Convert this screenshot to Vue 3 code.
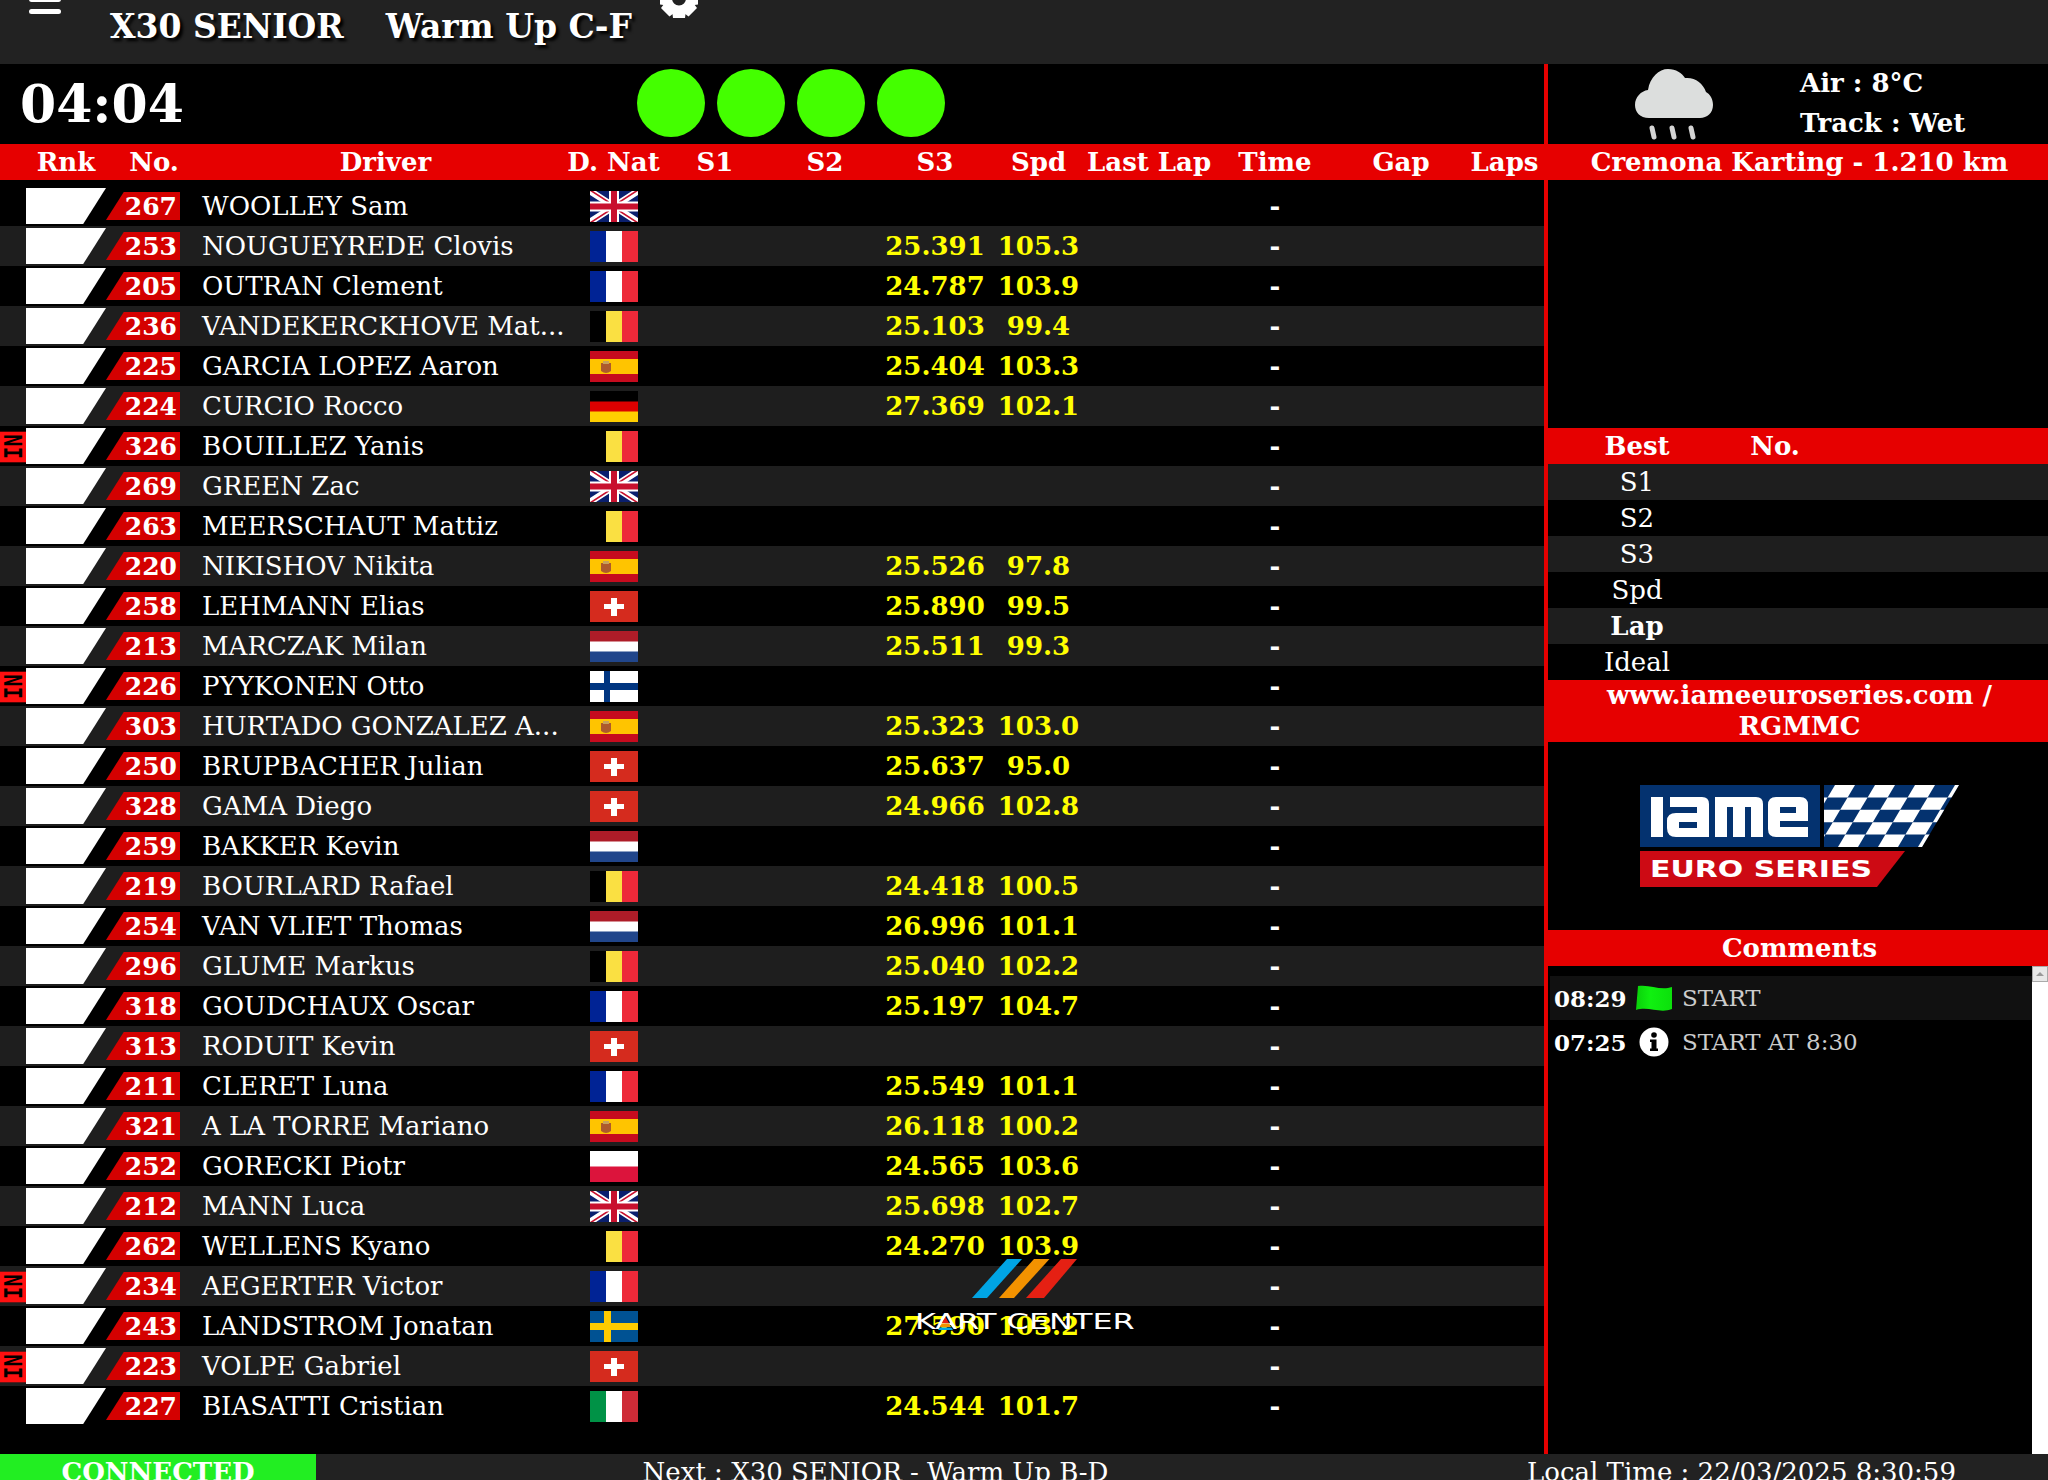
<template>
  <div class="page">
    <header class="topbar">
      <svg class="menu-icon" viewBox="0 0 32 14" width="32" height="14">
        <rect x="0" y="-3" width="32" height="5" rx="2.5" fill="#fff" />
        <rect x="0" y="9" width="32" height="5" rx="2.5" fill="#fff" />
      </svg>
      <div class="title">
        <span>X30 SENIOR</span>
        <span>Warm Up C-F</span>
      </div>
      <svg class="gear-icon" viewBox="0 0 38 19" width="38" height="19">
        <g transform="translate(19 -1.500)">
          <path
            v-for="a in gearTeeth"
            :key="a"
            d="M-6-19.500H6L7-12H-7Z"
            fill="#fff"
            :transform="`rotate(${a})`"
          />
          <path d="M0-14A14 14 0 1 0 0 14A14 14 0 1 0 0-14ZM0-7A7 7 0 1 1 0 7A7 7 0 1 1 0-7Z" fill="#fff" />
        </g>
      </svg>
    </header>

    <main class="main">
      <section class="board">
        <div class="status">
          <div class="timer">04:04</div>
          <div class="lights">
            <span v-for="n in 4" :key="n" class="light"></span>
          </div>
        </div>
        <div class="grid-row head">
          <span class="c-rnk">Rnk</span>
          <span class="c-shift">No.</span>
          <span class="c-driver">Driver</span>
          <span class="c-nat">D. Nat</span>
          <span>S1</span>
          <span>S2</span>
          <span>S3</span>
          <span>Spd</span>
          <span>Last Lap</span>
          <span class="c-shift">Time</span>
          <span class="c-shift">Gap</span>
          <span class="c-shift">Laps</span>
        </div>
        <div class="rows">
          <div v-for="d in drivers" :key="d.no" class="grid-row line">
            <span class="pit"><b v-if="d.pit">IN</b></span>
            <span class="rank"></span>
            <span class="num">{{ d.no }}</span>
            <span class="name">{{ d.name }}</span>
            <span class="nat">
              <svg viewBox="0 0 48 31" width="48" height="31">
                <path
                  v-for="(s, i) in flags[d.nat]"
                  :key="i"
                  :d="s[0]"
                  :fill="s[1]"
                />
              </svg>
            </span>
            <span></span>
            <span></span>
            <span class="val">{{ d.s3 }}</span>
            <span class="val">{{ d.spd }}</span>
            <span></span>
            <span class="dash">-</span>
            <span></span>
            <span></span>
          </div>
          <div class="kart-logo">
            <svg viewBox="0 0 105 39" width="105" height="39">
              <path d="M35 0H50L15 39H0Z" fill="#00a4e4" />
              <path d="M62 0H77.500L42 39H27Z" fill="#f39200" />
              <path d="M89 0H105L72 39H54Z" fill="#e52013" />
            </svg>
            <div class="kart-name">KART CENTER</div>
            <svg class="kart-a" viewBox="0 0 15 13" width="15" height="13">
              <path d="M7.500 0L11 6H4Z" fill="#e52013" />
              <path d="M3.700 6.500H11.300L13 10H2Z" fill="#f39200" />
              <path d="M1.800 10.500H13.200L15 13H0Z" fill="#00a4e4" />
            </svg>
          </div>
        </div>
      </section>

      <aside class="side">
        <div class="weather">
          <svg class="cloud" viewBox="0 0 78 72" width="78" height="72">
            <path
              d="M14 50C5 50 0 44 0 37C0 29 6 23 13 22C15 9 24 1 33 1C41 1 47 5 50 10C60 9 68 15 71 24C75 26 78 31 78 37C78 45 72 50 65 50Z"
              fill="#dcdedd"
            />
            <path d="M17 60L19 69M37 60L39 69M56 60L58 69" stroke="#d4d4d4" stroke-width="5" stroke-linecap="round" />
          </svg>
          <div class="weather-text">
            <div>Air : 8°C</div>
            <div>Track : Wet</div>
          </div>
        </div>
        <div class="band">Cremona Karting - 1.210 km</div>
        <div class="side-gap"></div>
        <div class="best-row band">
          <span>Best</span>
          <span>No.</span>
        </div>
        <div v-for="b in bests" :key="b" class="best-row item" :class="{ strong: b === 'Lap' }">
          <span>{{ b }}</span>
        </div>
        <div class="band link">www.iameeuroseries.com / RGMMC</div>
        <div class="iame">
          <svg viewBox="0 0 320 102" width="320" height="102">
            <defs>
              <clipPath id="iame-flag">
                <path d="M184 0H319L282 62H184Z" />
              </clipPath>
            </defs>
            <path d="M0 0H180V62H0Z" fill="#04326f" />
            <path d="M184 0H319L282 62H184Z" fill="#04326f" />
            <g clip-path="url(#iame-flag)">
              <path v-for="(c, i) in checks" :key="i" :d="c" fill="#fff" />
            </g>
            <path d="M11 12H23V52H11Z" fill="#fff" />
            <path d="M30 12H62Q69 12 69 19V52H36Q27 52 27 43V36Q27 28 36 28H57V22H30ZM39 37V43H57V37Z" fill="#fff" />
            <path d="M75 12H116Q123 12 123 19V52H111V22H105V52H93V22H87V52H75Z" fill="#fff" />
            <path d="M128 20Q128 12 136 12H160Q168 12 168 20V36H140V42H168V52H136Q128 52 128 44ZM140 22V28H156V22Z" fill="#fff" />
            <path d="M0 66H265L237 102H0Z" fill="#cd0a14" />
            <text x="10" y="92" class="euro" textLength="222" lengthAdjust="spacingAndGlyphs">EURO SERIES</text>
          </svg>
        </div>
        <div class="band">Comments</div>
        <div class="comments">
          <div class="comment-list">
            <div class="comment shaded">
              <b>08:29</b>
              <svg viewBox="0 0 36 27" width="36" height="27">
                <defs>
                  <linearGradient id="flag-green" x1="0" x2="1" y1="0" y2="0">
                    <stop offset="0" stop-color="#0ad00a" />
                    <stop offset="0.4" stop-color="#10f010" />
                    <stop offset="1" stop-color="#0ce00c" />
                  </linearGradient>
                </defs>
                <path d="M2 1C14 -1 24 6 36 2L36 24C24 29 13 21 0 25Z" fill="url(#flag-green)" />
              </svg>
              <span>START</span>
            </div>
            <div class="comment">
              <b>07:25</b>
              <svg viewBox="0 0 36 30" width="36" height="30">
                <circle cx="18" cy="15" r="14.500" fill="#fff" />
                <circle cx="18" cy="8" r="2.800" fill="#000" />
                <path d="M14 12.500H20.500V21.500H22V24H14V21.500H15.500V15H14Z" fill="#000" />
              </svg>
              <span>START AT 8:30</span>
            </div>
          </div>
          <div class="scrollbar">
            <div class="scroll-btn"><i></i></div>
          </div>
        </div>
      </aside>
    </main>

    <footer class="bottombar">
      <div class="connected">CONNECTED</div>
      <div class="next">Next : X30 SENIOR - Warm Up B-D</div>
      <div class="clock">Local Time : 22/03/2025 8:30:59</div>
    </footer>
  </div>
</template>

<script setup>
const gearTeeth = [0, 45, 90, 135, 180, 225, 270, 315];

const v = (a, b, c) => [['M0 0H16V31H0Z', a], ['M16 0H32V31H16Z', b], ['M32 0H48V31H32Z', c]];
const h = (a, b, c) => [['M0 0H48V11H0Z', a], ['M0 10.500H48V21H0Z', b], ['M0 20.500H48V31H0Z', c]];

// flags, each shape is [path, fill]
const flags = {
  uk: [
    ['M0 0H48V31H0Z', '#0a1f6e'],
    ['M0 0H6L48 27V31H42L0 4Z M48 0V4L6 31H0V27L42 0Z', '#fff'],
    ['M0 0H3L27 15.500H24Z M48 0L24 15.500H21L45 0Z M48 31H45L21 15.500H24Z M0 31L24 15.500H27L3 31Z', '#c8102e'],
    ['M19 0H29V10.500H48V20.500H29V31H19V20.500H0V10.500H19Z', '#fff'],
    ['M21 0H27V12.500H48V18.500H27V31H21V18.500H0V12.500H21Z', '#c8102e']
  ],
  fr: v('#002395', '#fff', '#ed2939'),
  be: v('#000', '#fae042', '#ed2939'),
  it: v('#009246', '#fff', '#ce2b37'),
  de: h('#000', '#dd0000', '#ffce00'),
  nl: h('#ae1c28', '#fff', '#21468b'),
  pl: [['M0 0H48V16H0Z', '#fff'], ['M0 15.500H48V31H0Z', '#dc143c']],
  es: [
    ['M0 0H48V31H0Z', '#c60b1e'],
    ['M0 8H48V23H0Z', '#ffc400'],
    ['M11 12H21V20Q16 24 11 20Z', '#ad5a2c'],
    ['M13 10H19V13H13Z', '#c8a25a']
  ],
  ch: [['M0 0H48V31H0Z', '#d52b1e'], ['M21 7H27V13H34V18H27V25H21V18H14V13H21Z', '#fff']],
  fi: [['M0 0H48V31H0Z', '#fff'], ['M14 0H20V12H48V19H20V31H14V19H0V12H14Z', '#003580']],
  se: [['M0 0H48V31H0Z', '#005293'], ['M14 0H21V12H48V19H21V31H14V19H0V12H14Z', '#fecb00']]
};

const drivers = [
  { no: 267, name: 'WOOLLEY Sam', nat: 'uk' },
  { no: 253, name: 'NOUGUEYREDE Clovis', nat: 'fr', s3: '25.391', spd: '105.3' },
  { no: 205, name: 'OUTRAN Clement', nat: 'fr', s3: '24.787', spd: '103.9' },
  { no: 236, name: 'VANDEKERCKHOVE Mat...', nat: 'be', s3: '25.103', spd: '99.4' },
  { no: 225, name: 'GARCIA LOPEZ Aaron', nat: 'es', s3: '25.404', spd: '103.3' },
  { no: 224, name: 'CURCIO Rocco', nat: 'de', s3: '27.369', spd: '102.1' },
  { no: 326, name: 'BOUILLEZ Yanis', nat: 'be', pit: true },
  { no: 269, name: 'GREEN Zac', nat: 'uk' },
  { no: 263, name: 'MEERSCHAUT Mattiz', nat: 'be' },
  { no: 220, name: 'NIKISHOV Nikita', nat: 'es', s3: '25.526', spd: '97.8' },
  { no: 258, name: 'LEHMANN Elias', nat: 'ch', s3: '25.890', spd: '99.5' },
  { no: 213, name: 'MARCZAK Milan', nat: 'nl', s3: '25.511', spd: '99.3' },
  { no: 226, name: 'PYYKONEN Otto', nat: 'fi', pit: true },
  { no: 303, name: 'HURTADO GONZALEZ A...', nat: 'es', s3: '25.323', spd: '103.0' },
  { no: 250, name: 'BRUPBACHER Julian', nat: 'ch', s3: '25.637', spd: '95.0' },
  { no: 328, name: 'GAMA Diego', nat: 'ch', s3: '24.966', spd: '102.8' },
  { no: 259, name: 'BAKKER Kevin', nat: 'nl' },
  { no: 219, name: 'BOURLARD Rafael', nat: 'be', s3: '24.418', spd: '100.5' },
  { no: 254, name: 'VAN VLIET Thomas', nat: 'nl', s3: '26.996', spd: '101.1' },
  { no: 296, name: 'GLUME Markus', nat: 'be', s3: '25.040', spd: '102.2' },
  { no: 318, name: 'GOUDCHAUX Oscar', nat: 'fr', s3: '25.197', spd: '104.7' },
  { no: 313, name: 'RODUIT Kevin', nat: 'ch' },
  { no: 211, name: 'CLERET Luna', nat: 'fr', s3: '25.549', spd: '101.1' },
  { no: 321, name: 'A LA TORRE Mariano', nat: 'es', s3: '26.118', spd: '100.2' },
  { no: 252, name: 'GORECKI Piotr', nat: 'pl', s3: '24.565', spd: '103.6' },
  { no: 212, name: 'MANN Luca', nat: 'uk', s3: '25.698', spd: '102.7' },
  { no: 262, name: 'WELLENS Kyano', nat: 'be', s3: '24.270', spd: '103.9' },
  { no: 234, name: 'AEGERTER Victor', nat: 'fr', pit: true },
  { no: 243, name: 'LANDSTROM Jonatan', nat: 'se', s3: '27.590', spd: '103.2' },
  { no: 223, name: 'VOLPE Gabriel', nat: 'ch', pit: true },
  { no: 227, name: 'BIASATTI Cristian', nat: 'it', s3: '24.544', spd: '101.7' }
];

const bests = ['S1', 'S2', 'S3', 'Spd', 'Lap', 'Ideal'];

// checker of the iame logo, slanted cells clipped to the flag shape
const checks = [];
for (let r = 0; r < 5; r++) {
  for (let c = -1; c < 4; c++) {
    const x = 195 + c * 40 - r * 7.4 + (r % 2 ? 20 : 0);
    const y = r * 12.4;
    checks.push(`M${x} ${y}H${x + 20}L${x + 12.6} ${y + 12.4}H${x - 7.4}Z`);
  }
}
</script>

<style>
html,
body {
  margin: 0;
  background: #000;
}
</style>

<style scoped>
.page {
  width: 2048px;
  height: 1480px;
  display: flex;
  flex-direction: column;
  overflow: hidden;
  background: #000;
  color: #fff;
  font-family: "DejaVu Serif", serif;
}

.topbar {
  height: 64px;
  flex-shrink: 0;
  background: #222;
  display: flex;
  align-items: flex-start;
}
.menu-icon {
  margin-left: 29px;
  flex-shrink: 0;
}
.title {
  margin-left: 49px;
  margin-top: 7px;
  width: 550px;
  display: flex;
  gap: 42px;
  font-size: 33px;
  line-height: 40px;
  font-weight: bold;
  text-shadow: 3px 3px 3px #000;
}
.gear-icon {
  flex-shrink: 0;
}

.main {
  flex: 1;
  display: flex;
  min-height: 0;
}
.board {
  width: 1544px;
  flex-shrink: 0;
  display: flex;
  flex-direction: column;
}
.status {
  height: 80px;
  display: flex;
  align-items: center;
}
.timer {
  width: 637px;
  padding-left: 20px;
  box-sizing: border-box;
  font-size: 52px;
  font-weight: bold;
  margin-top: -1px;
}
.lights {
  display: flex;
  gap: 12px;
  margin-top: -2px;
}
.light {
  width: 68px;
  height: 68px;
  border-radius: 50%;
  background: #44ff00;
}

.grid-row {
  display: grid;
  grid-template-columns: 26px 87px 80px 377px 90px 110px 110px 110px 97px 124px 126px 126px 81px;
  align-items: center;
  text-align: center;
}
.head {
  height: 36px;
  background: #e60000;
  font-size: 26px;
  line-height: 36px;
  font-weight: bold;
  white-space: nowrap;
}
.c-rnk {
  grid-column: 1 / span 2;
  padding-left: 19px;
}
.c-driver {
  padding-left: 8px;
}
.c-nat {
  margin-left: -3px;
}
.c-shift {
  padding-left: 2px;
}
.rows {
  position: relative;
  padding-top: 6px;
}
.line {
  height: 40px;
  font-size: 26px;
}
.line:nth-child(even) {
  background: #1e1e1e;
}
.pit {
  height: 36px;
  margin-top: 2px;
}
.pit b {
  display: block;
  width: 26px;
  height: 36px;
  padding-right: 2px;
  box-sizing: border-box;
  background: #ff1010;
  color: #000;
  font-family: "DejaVu Sans Mono", monospace;
  font-size: 24px;
  line-height: 24px;
  writing-mode: vertical-rl;
  transform: rotate(180deg) scaleY(0.85);
  text-align: center;
}
.rank {
  height: 36px;
  width: 80px;
  background: #fff;
  clip-path: polygon(0 0, 100% 0, 71.500% 100%, 0 100%);
}
.num {
  height: 28px;
  margin-left: -7px;
  width: 74px;
  background: #d40000;
  clip-path: polygon(24% 0, 100% 0, 100% 100%, 0 100%);
  font-size: 25px;
  line-height: 29px;
  font-weight: bold;
  text-align: right;
  padding-right: 3px;
  box-sizing: border-box;
}
.name {
  padding-left: 9px;
  text-align: left;
  white-space: nowrap;
}
.nat {
  height: 31px;
  padding-right: 3px;
}
.nat svg {
  display: block;
  margin: 0 auto;
}
.val {
  color: #ffff00;
  font-weight: bold;
}
.dash {
  padding-left: 2px;
  font-weight: bold;
}

.kart-logo {
  position: absolute;
  left: 915px;
  top: 1079px;
  width: 218px;
}
.kart-logo svg {
  display: block;
  margin-left: 57px;
}
.kart-name {
  margin-top: 13px;
  font-family: "DejaVu Sans", sans-serif;
  font-size: 22px;
  line-height: 22px;
  white-space: nowrap;
  transform: scaleX(1.45);
  transform-origin: left;
}
.kart-logo .kart-a {
  position: absolute;
  left: 23px;
  top: 58px;
  margin: 0;
}

.side {
  flex: 1;
  border-left: 4px solid #e60000;
  display: flex;
  flex-direction: column;
  min-width: 0;
}
.weather {
  height: 80px;
  display: flex;
  align-items: flex-start;
}
.cloud {
  margin-left: 87px;
  margin-top: 4px;
}
.weather-text {
  margin-left: 87px;
  margin-top: -1px;
  font-size: 26px;
  font-weight: bold;
  line-height: 40px;
}
.band {
  min-height: 36px;
  background: #e60000;
  font-size: 26px;
  font-weight: bold;
  line-height: 36px;
  text-align: center;
  padding-left: 3px;
}
.side-gap {
  height: 248px;
}
.best-row {
  display: grid;
  grid-template-columns: 178px 98px;
  height: 36px;
  line-height: 36px;
  text-align: center;
  font-size: 26px;
  padding-left: 0;
}
.item:nth-of-type(odd) {
  background: #1e1e1e;
}
.strong {
  font-weight: bold;
}
.link {
  line-height: 31px;
}
.iame {
  height: 188px;
  display: flex;
  justify-content: flex-start;
  align-items: flex-start;
  padding-left: 92px;
  padding-top: 43px;
  box-sizing: border-box;
}
.euro {
  font-family: "DejaVu Sans", sans-serif;
  font-size: 23px;
  font-weight: bold;
  fill: #fff;
}
.comments {
  flex: 1;
  display: flex;
  min-height: 0;
}
.comment-list {
  flex: 1;
  padding: 10px 0 0 2px;
}
.comment {
  height: 44px;
  display: flex;
  align-items: center;
  padding-left: 4px;
  gap: 10px;
}
.comment.shaded {
  background: #111;
}
.comment b {
  font-size: 23px;
  width: 72px;
}
.comment span {
  font-size: 23px;
  color: #ccc;
}
.scrollbar {
  width: 16px;
  background: #fff;
}
.scroll-btn {
  height: 16px;
  background: #e8e8e8;
  border: 1px solid #aaa;
  box-sizing: border-box;
  display: flex;
  align-items: center;
  justify-content: center;
}
.scroll-btn i {
  width: 0;
  height: 0;
  border-left: 4px solid transparent;
  border-right: 4px solid transparent;
  border-bottom: 4px solid #999;
}

.bottombar {
  height: 26px;
  flex-shrink: 0;
  background: #222;
  display: flex;
  font-size: 26px;
  line-height: 36px;
  overflow: hidden;
  text-align: center;
}
.connected {
  width: 316px;
  background: #22ee22;
  font-weight: bold;
}
.next {
  width: 1119px;
}
.clock {
  width: 613px;
}
</style>
